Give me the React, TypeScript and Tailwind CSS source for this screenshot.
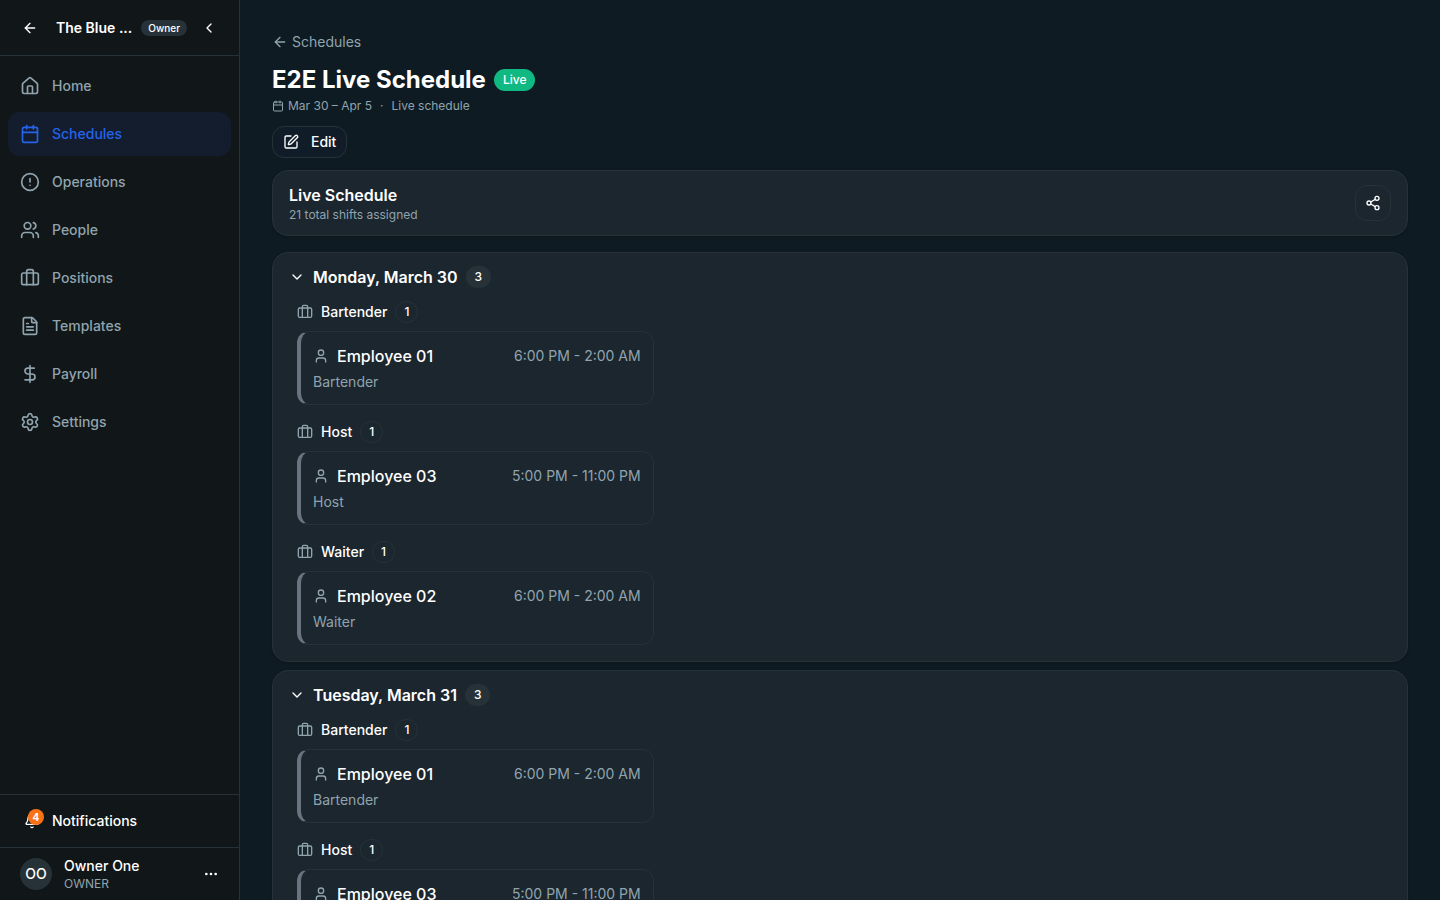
import React, { useState } from "react";
import {
  ArrowLeft,
  Bell,
  Briefcase,
  Calendar,
  ChevronDown,
  ChevronLeft,
  CircleAlert,
  DollarSign,
  Ellipsis,
  FileText,
  House,
  Settings,
  Share2,
  SquarePen,
  User,
  Users,
  type LucideIcon,
} from "lucide-react";

interface NavItem {
  label: string;
  icon: LucideIcon;
}

interface Shift {
  employee: string;
  role: string;
  time: string;
}

interface Day {
  label: string;
  shifts: Shift[];
}

const NAV_ITEMS: NavItem[] = [
  { label: "Home", icon: House },
  { label: "Schedules", icon: Calendar },
  { label: "Operations", icon: CircleAlert },
  { label: "People", icon: Users },
  { label: "Positions", icon: Briefcase },
  { label: "Templates", icon: FileText },
  { label: "Payroll", icon: DollarSign },
  { label: "Settings", icon: Settings },
];

const DAILY_SHIFTS: Shift[] = [
  { employee: "Employee 01", role: "Bartender", time: "6:00 PM - 2:00 AM" },
  { employee: "Employee 03", role: "Host", time: "5:00 PM - 11:00 PM" },
  { employee: "Employee 02", role: "Waiter", time: "6:00 PM - 2:00 AM" },
];

const DAYS: Day[] = [
  { label: "Monday, March 30", shifts: DAILY_SHIFTS },
  { label: "Tuesday, March 31", shifts: DAILY_SHIFTS },
];

function Sidebar() {
  const [active, setActive] = useState("Schedules");

  return (
    <aside className="flex w-60 shrink-0 flex-col border-r border-[#263238] bg-[#111618]">
      <div className="flex h-14 shrink-0 items-center border-b border-[#263238] px-3">
        <button type="button" aria-label="Back" className="flex size-9 shrink-0 items-center justify-center rounded-xl">
          <ArrowLeft className="size-4" />
        </button>
        <span className="ml-2 min-w-0 flex-1 text-sm font-semibold whitespace-nowrap">The Blue ...</span>
        <span className="ml-2 rounded-full bg-[#263238] px-[7px] text-[10px] leading-4 font-medium">Owner</span>
        <button type="button" aria-label="Collapse sidebar" className="ml-1 flex size-9 shrink-0 items-center justify-center rounded-xl">
          <ChevronLeft className="size-4" />
        </button>
      </div>

      <nav className="flex min-h-0 flex-1 flex-col gap-1 p-2">
        {NAV_ITEMS.map(({ label, icon: Icon }) => (
          <a
            key={label}
            href="#"
            onClick={(e) => {
              e.preventDefault();
              setActive(label);
            }}
            className={`flex h-11 items-center gap-3 rounded-xl px-3 text-sm font-medium ${
              active === label ? "bg-[#131d2d] text-[#2563eb]" : "text-[#90a4ae] hover:bg-[#1b262f]"
            }`}
          >
            <Icon className="size-5" />
            {label}
          </a>
        ))}
      </nav>

      <div className="border-t border-[#263238] p-2">
        <button type="button" className="flex h-9 w-full items-center gap-3 rounded-xl px-4 text-sm font-medium">
          <span className="relative">
            <Bell className="size-4" />
            <span className="absolute -top-1 -right-1 flex size-4 items-center justify-center rounded-full bg-[#f97316] text-[10px] font-bold">
              4
            </span>
          </span>
          Notifications
        </button>
      </div>

      <div className="flex items-center border-t border-[#263238] py-2 pr-3 pl-5">
        <span className="flex size-8 items-center justify-center rounded-full bg-[#263238] text-sm font-medium">OO</span>
        <div className="ml-3 flex-1">
          <p className="text-sm leading-5 font-medium">Owner One</p>
          <p className="text-xs leading-4 text-[#90a4ae]">OWNER</p>
        </div>
        <button type="button" aria-label="Account menu" className="flex size-8 items-center justify-center">
          <Ellipsis className="size-4" />
        </button>
      </div>
    </aside>
  );
}

function ShiftCard({ shift }: { shift: Shift }) {
  return (
    <div className="rounded-xl border border-l-4 border-[#263238] border-l-[#6b7280] p-3">
      <div className="flex items-center justify-between">
        <div className="flex items-center gap-2">
          <User className="size-4 text-[#90a4ae]" />
          <span className="text-base leading-6 font-medium">{shift.employee}</span>
        </div>
        <span className="text-sm text-[#90a4ae]">{shift.time}</span>
      </div>
      <p className="mt-1 text-sm text-[#90a4ae]">{shift.role}</p>
    </div>
  );
}

function DaySection({ day }: { day: Day }) {
  const [isOpen, setIsOpen] = useState(true);

  return (
    <section className="rounded-2xl border border-[#263238] bg-[#1b262f] shadow-sm">
      <button
        type="button"
        aria-expanded={isOpen}
        onClick={() => setIsOpen(!isOpen)}
        className="flex w-full items-center gap-2 px-4 py-3 text-left"
      >
        <ChevronDown className={`size-4 ${isOpen ? "" : "-rotate-90"}`} />
        <span className="text-base leading-6 font-semibold">{day.label}</span>
        <span className="rounded-full bg-[#263238] px-[9px] py-[3px] text-xs leading-4 font-medium">{day.shifts.length}</span>
      </button>

      {isOpen && (
        <div className="flex flex-col gap-4 px-6 pb-4">
          {day.shifts.map((shift) => (
            <div key={shift.role}>
              <div className="mb-2 flex items-center gap-2">
                <Briefcase className="size-4 text-[#90a4ae]" />
                <h3 className="text-sm font-medium">{shift.role}</h3>
                <span className="rounded-full border border-[#263238] px-2 py-[2px] text-xs leading-4 font-medium">1</span>
              </div>
              <div className="grid grid-cols-3 gap-2">
                <ShiftCard shift={shift} />
              </div>
            </div>
          ))}
        </div>
      )}
    </section>
  );
}

export default function App() {
  return (
    <div className="flex h-screen overflow-hidden bg-[#0f1b22] font-['Inter',sans-serif] text-white">
      <Sidebar />

      <main className="min-w-0 flex-1 overflow-y-auto p-8 [scrollbar-width:none]">
        <a href="#" className="flex w-fit items-center gap-1 text-sm text-[#90a4ae]">
          <ArrowLeft className="size-4" />
          Schedules
        </a>

        <div className="mt-3 flex items-center gap-2">
          <h1 className="text-2xl leading-8 font-bold">E2E Live Schedule</h1>
          <span className="rounded-full bg-[#10b981] px-[9px] py-[3px] text-xs leading-4 font-medium">Live</span>
        </div>

        <div className="mt-[2px] flex items-center gap-1 text-xs leading-4 text-[#90a4ae]">
          <Calendar className="size-3" />
          <span>Mar 30 – Apr 5</span>
          <span className="mx-1">·</span>
          <span>Live schedule</span>
        </div>

        <button
          type="button"
          className="mt-3 flex h-8 items-center gap-3 rounded-xl border border-[#263238] bg-[#111c29] px-[10px] text-sm font-medium"
        >
          <SquarePen className="size-4" />
          Edit
        </button>

        <div className="mt-3 flex items-center justify-between rounded-2xl border border-[#263238] bg-[#1b262f] px-4 py-3 shadow-sm">
          <div>
            <h2 className="text-base leading-6 font-semibold">Live Schedule</h2>
            <p className="text-xs leading-4 text-[#90a4ae]">21 total shifts assigned</p>
          </div>
          <button
            type="button"
            aria-label="Share"
            className="flex size-9 items-center justify-center rounded-xl border border-[#263238]"
          >
            <Share2 className="size-4" />
          </button>
        </div>

        <div className="mt-4 flex flex-col gap-2">
          {DAYS.map((day) => (
            <DaySection key={day.label} day={day} />
          ))}
        </div>
      </main>
    </div>
  );
}
